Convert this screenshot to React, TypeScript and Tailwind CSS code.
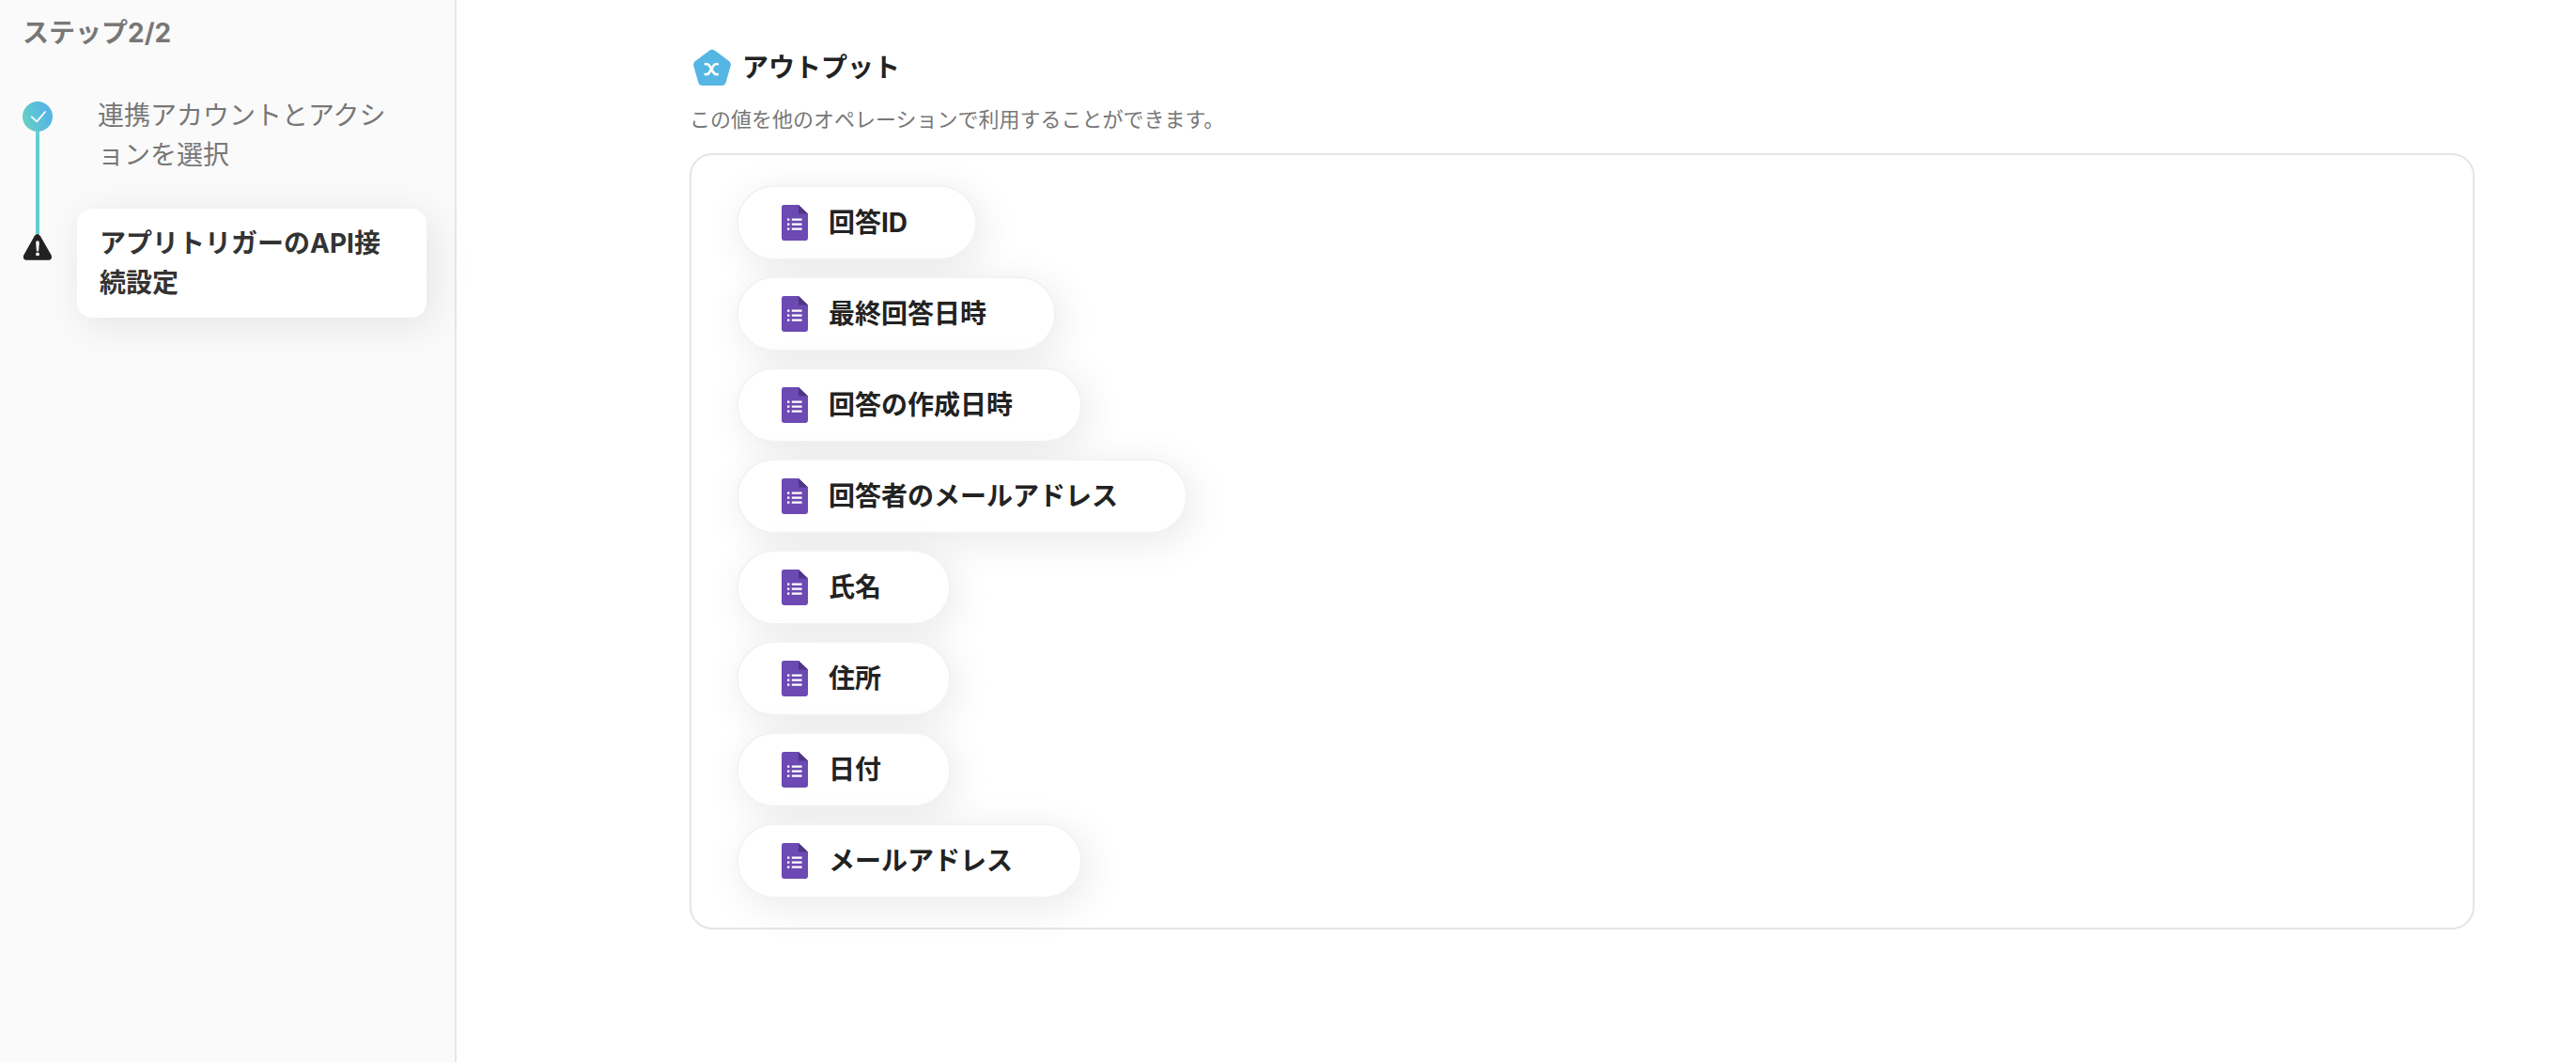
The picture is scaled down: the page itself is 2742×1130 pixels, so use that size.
type Step = {
  title: string;
  status: "done" | "warning";
};

const steps: Step[] = [
  { title: "連携アカウントとアクションを選択", status: "done" },
  { title: "アプリトリガーのAPI接続設定", status: "warning" },
];

const outputs = [
  "回答ID",
  "最終回答日時",
  "回答の作成日時",
  "回答者のメールアドレス",
  "氏名",
  "住所",
  "日付",
  "メールアドレス",
];

const CheckIcon = () => (
  <svg className="size-8 shrink-0" viewBox="0 0 32 32" aria-hidden="true">
    <defs>
      <linearGradient id="check-bg" x1="0" y1="0.75" x2="1" y2="0.35">
        <stop offset="0" stopColor="#67d2c2" />
        <stop offset="0.8" stopColor="#55b6e4" />
      </linearGradient>
    </defs>
    <circle cx="16" cy="16" r="16" fill="url(#check-bg)" />
    <path
      d="M9.8 16.4l5.4 5L24 11"
      fill="none"
      stroke="#fff"
      strokeWidth="1.8"
      strokeLinecap="round"
      strokeLinejoin="round"
    />
  </svg>
);

const WarningIcon = () => (
  <svg className="h-7 w-8 shrink-0" viewBox="0 0 32 28" aria-hidden="true">
    <path
      d="M12.6 2.2Q15.8-2 19 2.2L30.6 22.6Q32 27.2 28 27.7H4Q-.2 27.2 1.2 22.6Z"
      fill="#222"
    />
    <path d="M14.2 9a1.8 1.8 0 0 1 3.6 0l-.6 8.3a1.2 1.2 0 0 1-2.4 0Z" fill="#fff" />
    <circle cx="16" cy="21.4" r="1.9" fill="#fff" />
  </svg>
);

const OutputIcon = () => (
  <svg className="size-10 shrink-0" viewBox="0 0 40 40" aria-hidden="true">
    <path
      d="M17.2 1.7Q20 -.4 22.8 1.7L38 13Q40.4 15 39.7 18L34.6 36Q33.6 39 30.5 39H9.5Q6.4 39 5.4 36L.3 18Q-.4 15 2 13Z"
      fill="#55b6e4"
    />
    <path
      d="M12.8 16.2Q15.8 15.4 17.2 18L21.6 25.2Q23 27.6 25.8 27M25.8 16.2Q22.8 15.4 21.4 18L17 25.2Q15.600 27.600 12.800 27"
      fill="none"
      stroke="#fff"
      strokeWidth="2.6"
      strokeLinecap="round"
      strokeLinejoin="round"
    />
  </svg>
);

const FormIcon = () => (
  <svg className="h-[38px] w-7 shrink-0" viewBox="0 0 28 38" aria-hidden="true">
    <path
      d="M2.4 0H18l10 9.6v26a2.4 2.4 0 0 1-2.4 2.4H2.4A2.4 2.4 0 0 1 0 35.6V2.4A2.4 2.4 0 0 1 2.4 0Z"
      fill="#6c49b3"
    />
    <path d="M18 0l10 9.6H18Z" fill="#4f3684" />
    <path
      d="M6 14.6h2.4v2.2H6zM10.8 14.6h10.8v2.2H10.8zM6 19.6h2.4v2.2H6zM10.8 19.6h10.8v2.2H10.8zM6 24.6h2.4v2.2H6zM10.8 24.6h10.8v2.2H10.8z"
      fill="#fff"
    />
  </svg>
);

const StepItem = ({ step, last }: { step: Step; last: boolean }) => {
  const active = step.status === "warning";

  return (
    <li className="flex gap-[26px]">
      <div className="flex w-8 shrink-0 flex-col items-center">
        <div className={active ? "h-[27px] w-1 bg-[#62cdd2]" : "h-[22px]"} />
        {active ? <WarningIcon /> : <CheckIcon />}
        {!last && <div className="w-1 grow bg-[#62cdd2]" />}
      </div>
      <div className={last ? "grow" : "grow pb-5"}>
        <p
          className={
            active
              ? "rounded-2xl bg-white px-6 py-4 font-bold text-[#333] shadow-[6px_8px_44px_rgba(0,0,0,0.09)]"
              : "px-[22px] py-4 text-[#777]"
          }
        >
          {step.title}
        </p>
      </div>
    </li>
  );
};

export default function App() {
  return (
    <div
      lang="ja"
      className="flex min-h-screen bg-white font-[Inter,'Noto_Sans_CJK_JP',sans-serif] text-[28px] leading-[42px] text-[#222]"
    >
      <aside className="w-[486px] shrink-0 border-r-2 border-[#e5e5e5] bg-[#fafafa] pt-[14px] pr-[30px] pl-6">
        <h2 className="font-bold text-[#777]">ステップ2/2</h2>
        <ol className="mt-[30px]">
          {steps.map((step, index) => (
            <StepItem key={step.title} step={step} last={index === steps.length - 1} />
          ))}
        </ol>
      </aside>

      <main className="grow pt-[51px] pr-[108px] pb-12 pl-[248px]">
        <div className="flex items-center gap-3 pl-1">
          <OutputIcon />
          <h1 className="font-bold">アウトプット</h1>
        </div>
        <p className="mt-[18px] text-[22px] leading-8 text-[#777]">
          この値を他のオペレーションで利用することができます。
        </p>
        <ul className="mt-5 flex flex-col items-start gap-[17px] rounded-3xl border-2 border-[#e5e5e5] px-12 pt-8 pb-[31px]">
          {outputs.map((output) => (
            <li
              key={output}
              className="flex h-20 items-center gap-[22px] rounded-full border-2 border-[#f3f3f3] bg-white pr-[72px] pl-[46px] font-bold shadow-[6px_8px_44px_rgba(0,0,0,0.09)]"
            >
              <FormIcon />
              {output}
            </li>
          ))}
        </ul>
      </main>
    </div>
  );
}
